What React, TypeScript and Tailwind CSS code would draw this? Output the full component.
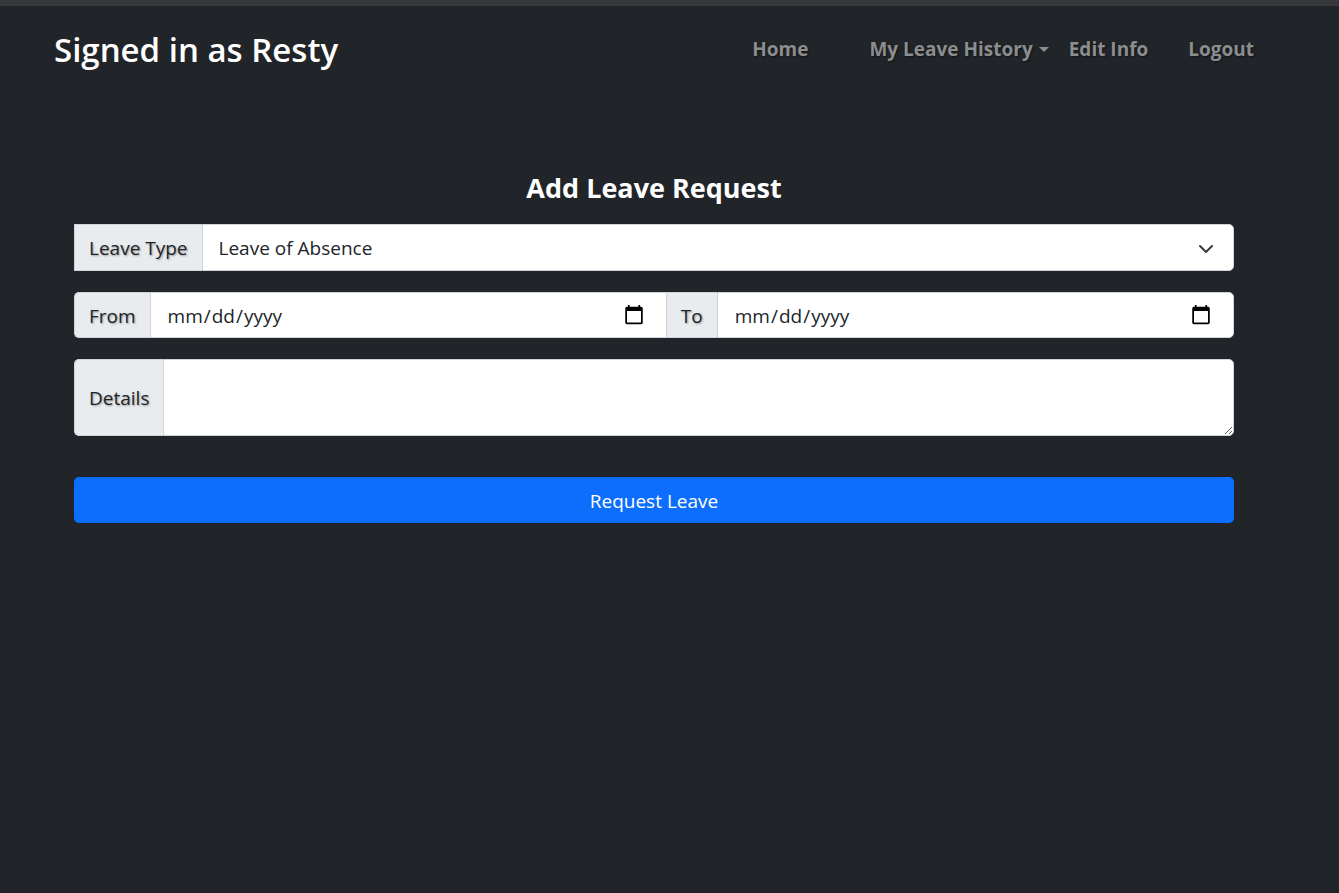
import React from 'react';

const font = { fontFamily: '"Open Sans", "Noto Sans", Arial, sans-serif' };

const NavLink: React.FC<{ label: string; caret?: boolean }> = ({ label, caret }) => (
  <a
    href="#"
    className="flex items-center text-[19px] font-bold text-[#8c8d8f] [text-shadow:1px_1px_2px_rgba(0,0,0,0.5)]"
  >
    {label}
    {caret && (
      <span className="ml-[6px] inline-block h-0 w-0 border-x-[5px] border-t-[5px] border-x-transparent border-t-[#8c8d8f]" />
    )}
  </a>
);

const Addon: React.FC<{ children: React.ReactNode; className?: string }> = ({ children, className = '' }) => (
  <span
    className={`flex items-center bg-[#e9ecef] px-[14px] pt-[3px] text-[19px] text-[#212529] [text-shadow:1px_1px_2px_rgba(0,0,0,0.35)] border border-[#ced4da] ${className}`}
  >
    {children}
  </span>
);

const dateCls =
  'h-full flex-1 border border-[#ced4da] bg-white pl-4 pr-[19px] pt-[3px] text-[19px] text-[#212529] outline-none [&::-webkit-calendar-picker-indicator]:h-[22px] [&::-webkit-calendar-picker-indicator]:w-[22px] [&::-webkit-calendar-picker-indicator]:-mt-[3px]';

export default function App() {
  return (
    <div className="min-h-screen bg-[#212529]" style={font}>
      <div className="h-[6px] bg-[#38393d]" />

      {/* Navbar */}
      <nav className="flex h-[90px] items-center justify-between pl-[54px] pr-[85px] pb-[3px]">
        <span className="text-[33px] font-semibold text-white">Signed in as Resty</span>
        <div className="flex items-center">
          <div className="mr-[61px]"><NavLink label="Home" /></div>
          <div className="mr-[20px]"><NavLink label="My Leave History" caret /></div>
          <div className="mr-[40px]"><NavLink label="Edit Info" /></div>
          <NavLink label="Logout" />
        </div>
      </nav>

      {/* Form */}
      <main className="mx-[74px] w-[1160px] pt-[72px]">
        <h2 className="mb-[15px] text-center text-[27px] font-bold text-white">Add Leave Request</h2>

        <div className="flex h-[47px]">
          <Addon className="border-r-0">Leave Type</Addon>
          <div className="relative flex flex-1 items-center rounded-r-[5px] border border-[#ced4da] bg-white">
            <select
              className="h-full w-full appearance-none bg-transparent pl-4 pt-[3px] text-[19px] text-[#212529] outline-none"
              defaultValue="loa"
            >
              <option value="loa">Leave of Absence</option>
            </select>
            <svg className="pointer-events-none absolute right-[19px] top-[18px]" width="16" height="12" viewBox="0 0 16 12">
              <path d="M2 3l6 6 6-6" fill="none" stroke="#343a40" strokeWidth="2" strokeLinecap="round" strokeLinejoin="round" />
            </svg>
          </div>
        </div>

        <div className="mt-[21px] flex h-[46px]">
          <Addon className="rounded-l-[5px] border-r-0">From</Addon>
          <input type="date" className={dateCls} />
          <Addon className="border-x-0">To</Addon>
          <input type="date" className={`${dateCls} rounded-r-[5px]`} />
        </div>

        <div className="mt-[21px] flex h-[77px]">
          <Addon className="rounded-l-[5px] border-r-0">Details</Addon>
          <textarea className="h-full flex-1 resize-y rounded-r-[5px] border border-[#ced4da] bg-white px-4 py-2 text-[19px] outline-none" />
        </div>

        <button className="mt-[41px] h-[46px] w-full rounded-[5px] bg-[#0d6efd] pt-[3px] text-[19px] text-white">
          Request Leave
        </button>
      </main>
    </div>
  );
}
